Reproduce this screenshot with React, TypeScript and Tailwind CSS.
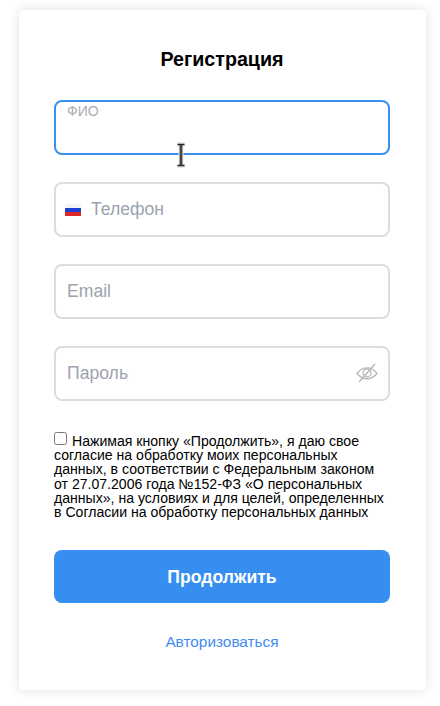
const fieldClass =
  'h-[55px] w-full rounded-lg border-2 border-[#dadde1] bg-white px-[11px] text-[17.6px] text-[#111827] outline-none placeholder:text-[#9ca3af]';

function RussianFlag() {
  return (
    <svg width="16" height="12" viewBox="0 0 16 12" className="shrink-0">
      <rect width="16" height="4" fill="#f4f4f4" />
      <rect y="4" width="16" height="4" fill="#1f3fd6" />
      <rect y="8" width="16" height="4" fill="#e0262b" />
    </svg>
  );
}

function EyeOff() {
  return (
    <svg width="22" height="20" viewBox="0 0 22 20" fill="none" stroke="#b8b8b8" strokeWidth="1.3">
      <path d="M1 10.5C4 6.5 7.5 4.8 11 4.8s7 1.7 10 5.7c-3 3.6-6.500 5.300-10 5.300s-7-1.700-10-5.300Z" />
      <circle cx="11" cy="10" r="4" />
      <path d="M19 1 3 19" strokeWidth="1.500" />
    </svg>
  );
}

function TextCursor() {
  return (
    <svg width="12" height="26" viewBox="0 0 12 26" className="absolute left-[175px] top-[142px]">
      <path d="M2 2h8M2 24h8M6 2v22" stroke="#e8e8e8" strokeWidth="5" fill="none" />
      <path d="M2.500 2.500h7M2.500 23.500h7" stroke="#222" strokeWidth="1.400" fill="none" />
      <path d="M6 3v20" stroke="#444" strokeWidth="2.800" fill="none" />
    </svg>
  );
}

export default function App() {
  return (
    <div className="relative min-h-[706px] bg-white font-['Liberation_Sans',Arial,sans-serif]">
      <div className="pl-[19px] pt-[10px]">
        <form className="h-[680px] w-[407px] rounded bg-white pl-[35px] pr-[36px] pt-[38px] shadow-[0_0_12px_rgba(0,0,0,0.12)]">
          <h1 className="text-center text-[19.68px] leading-[23px] font-bold text-black">Регистрация</h1>

          <div className="relative mt-[29px]">
            <input className="h-[55px] w-full rounded-lg border-2 border-[#3a8ff0] bg-white px-[11px] pt-4 text-[17.6px] outline-none" />
            <span className="absolute left-[13px] top-[3px] text-sm leading-4 text-[#a8adb5]">ФИО</span>
          </div>

          <div className="mt-[27px] flex h-[55px] items-center gap-[10px] rounded-lg border-2 border-[#dadde1] bg-white pl-[9px] pr-[11px]">
            <RussianFlag />
            <input placeholder="Телефон" className="w-full bg-transparent pb-[1px] text-[17.6px] text-[#111827] outline-none placeholder:text-[#9ca3af]" />
          </div>

          <input placeholder="Email" className={`mt-[27px] ${fieldClass}`} />

          <div className="relative mt-[27px]">
            <input placeholder="Пароль" className={fieldClass} />
            <span className="absolute right-[12px] top-[17px]">
              <EyeOff />
            </span>
          </div>

          <label className="mt-[31px] block text-[14.08px] leading-[14.2px] text-black">
            <input type="checkbox" className="mr-[5px] ml-0 inline-block h-[13px] w-[13px] align-[1px]" />
            Нажимая кнопку «Продолжить», я даю свое согласие на обработку моих персональных данных, в соответствии с Федеральным законом от 27.07.2006 года №152-ФЗ «О персональных данных», на условиях и для целей, определенных в Согласии на обработку персональных данных
          </label>

          <button type="button" className="mt-[31px] h-[53px] w-full rounded-lg bg-[#368ff0] text-[17.6px] font-bold text-white">
            Продолжить
          </button>

          <div className="mt-[27px] text-center">
            <a href="#login" className="text-[15.36px] leading-[18px] text-[#3f8cf0]">Авторизоваться</a>
          </div>
        </form>
      </div>
      <TextCursor />
    </div>
  );
}
